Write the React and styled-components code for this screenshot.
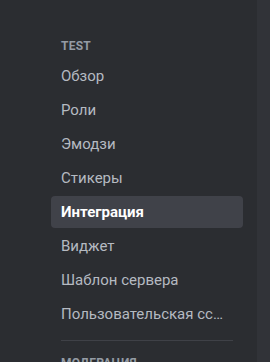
import React from 'react'
import styled, { createGlobalStyle } from 'styled-components'

const GlobalStyle = createGlobalStyle`
  html, body {
    margin: 0;
    padding: 0;
    background: #2b2d31;
    overflow: hidden;
  }
  body {
    font-family: Roboto, "Noto Sans", sans-serif;
  }
`;

const Layout = styled.div`
  display: flex;
  width: 270px;
  height: 362px;
  overflow: hidden;
`;

const Sidebar = styled.nav`
  width: 257px;
  flex-shrink: 0;
  box-sizing: border-box;
  padding: 32px 14px 0 51px;
  background: #2b2d31;
  display: flex;
  flex-direction: column;
  & > * {
    flex-shrink: 0;
  }
`;

const Content = styled.main`
  flex: 1;
  background: #313338;
`;

const Header = styled.div`
  padding: 6px 10px;
  font-size: 12px;
  line-height: 16px;
  font-weight: 700;
  text-transform: uppercase;
  letter-spacing: 0.02em;
  color: #949ba4;
`;

const Item = styled.div`
  height: 32px;
  margin-bottom: 2px;
  padding: 0 10px;
  border-radius: 4px;
  display: flex;
  align-items: center;
  font-size: 15px;
  font-weight: ${(p) => (p.$selected ? 700 : 400)};
  color: ${(p) => (p.$selected ? '#ffffff' : '#b5bac1')};
  background: ${(p) => (p.$selected ? '#404249' : 'transparent')};
  cursor: pointer;
  min-width: 0;
`;

const Label = styled.span`
  white-space: nowrap;
  overflow: hidden;
  text-overflow: ellipsis;
`;

const Separator = styled.div`
  height: 1px;
  margin: 8px 10px;
  background: #3f4147;
`;

const items = [
  'Обзор',
  'Роли',
  'Эмодзи',
  'Стикеры',
  'Интеграция',
  'Виджет',
  'Шаблон сервера',
  'Пользовательская ссылка-приглашение',
]

export default function App() {
  return (
    <>
      <GlobalStyle />
      <Layout>
        <Sidebar>
          <Header>Test</Header>
          {items.map((name) => (
            <Item key={name} $selected={name === 'Интеграция'}>
              <Label>{name}</Label>
            </Item>
          ))}
          <Separator />
          <Header>Модерация</Header>
        </Sidebar>
        <Content />
      </Layout>
    </>
  )
}
